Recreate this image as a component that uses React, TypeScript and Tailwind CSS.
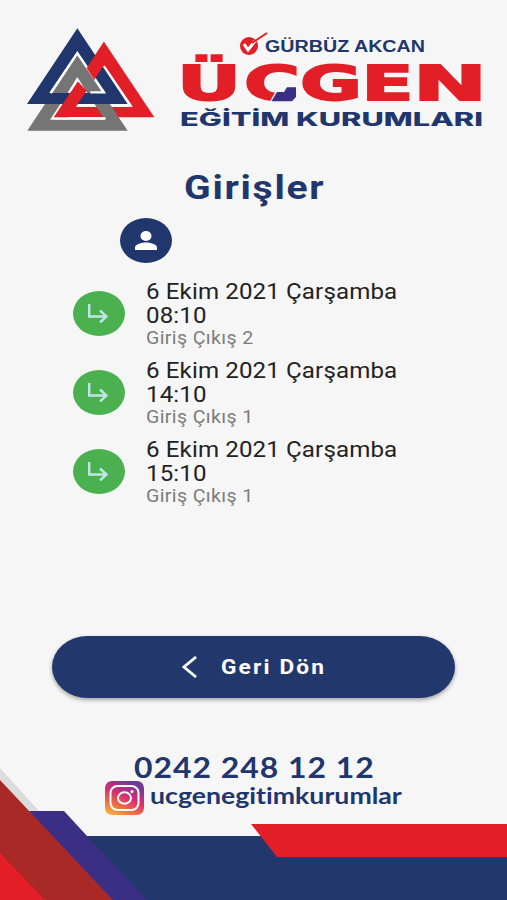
const entries = [
  { id: 1, date: '6 Ekim 2021 Çarşamba', time: '08:10', gate: 'Giriş Çıkış 2' },
  { id: 2, date: '6 Ekim 2021 Çarşamba', time: '14:10', gate: 'Giriş Çıkış 1' },
  { id: 3, date: '6 Ekim 2021 Çarşamba', time: '15:10', gate: 'Giriş Çıkış 1' },
]

function TriangleLogo() {
  return (
    <svg viewBox="0 0 450 360" className="w-[150px] h-[120px] shrink-0">
      <g fillRule="evenodd">
        <path fill="#e21f26" d="M267 65 418 292H117ZM267 136 183 260H350Z" />
        <path fill="none" stroke="#fff" strokeWidth="7" d="M267 139 347 257H183" />
        <path fill="#757575" d="M187 105 338 332H37ZM187 175 105 299H270Z" />
        <path fill="none" stroke="#fff" strokeWidth="7" d="M162 219 187 178 213 219M118 295H272" />
        <path fill="#21366d" d="M187 25 338 252H36ZM187 95 103 219H270Z" />
        <path fill="none" stroke="#fff" strokeWidth="7" d="M107 219 187 99 267 217H226" />
      </g>
      {/* red leg passing over the blue one */}
      <path fill="#e21f26" d="M267 65 215 144 238 179 267 136Z" />
      <path fill="#e21f26" d="M188 184 117 292H160L183 260 215 212Z" />
      <path fill="none" stroke="#fff" strokeWidth="4" d="M165 216 189 180" />
    </svg>
  )
}

function BrandText() {
  return (
    <svg viewBox="170 25 325 115" className="w-[325px] h-[115px] shrink-0">
      <circle cx="249" cy="46" r="9" fill="#e21f26" />
      <path d="M244 44 248 50 255 41" fill="none" stroke="#fff" strokeWidth="3" />
      <path d="M252 43 267 33" stroke="#e21f26" strokeWidth="2" />
      <text x="265" y="51.500" fontSize="16.800" textLength="160" lengthAdjust="spacingAndGlyphs" fill="#21366d" className="font-['Liberation_Sans',sans-serif] font-bold">
        GÜRBÜZ AKCAN
      </text>
      <g fontSize="47.500" fill="#e21f26" stroke="#e21f26" strokeWidth="1.800" className="font-['DejaVu_Sans',sans-serif] font-bold">
        <text x="177" y="100.200" textLength="64" lengthAdjust="spacingAndGlyphs">Ü</text>
        <text x="244" y="100.200" textLength="56" lengthAdjust="spacingAndGlyphs">C</text>
        <text x="300" y="100.200" textLength="62" lengthAdjust="spacingAndGlyphs">G</text>
        <text x="361.500" y="100.200" textLength="52" lengthAdjust="spacingAndGlyphs">E</text>
        <text x="413" y="100.200" textLength="74" lengthAdjust="spacingAndGlyphs">N</text>
      </g>
      <path d="M269 103 276.500 90 284 84H299V103Z" fill="#f6f6f6" />
      <path d="M271.500 101.200 277 92H284L287 87.300H296V97L292 101.200Z" fill="#3a2e85" />
      <text x="180" y="126.300" fontSize="18.200" textLength="303" lengthAdjust="spacingAndGlyphs" fill="#21366d" className="font-[Inter,sans-serif] font-extrabold">
        EĞİTİM KURUMLARI
      </text>
    </svg>
  )
}

function InstagramIcon() {
  return (
    <svg viewBox="0 0 39 34" className="w-[39px] h-[34px] shrink-0">
      <defs>
        <linearGradient id="ig" x1="0.1" y1="1" x2="0.6" y2="0">
          <stop offset="0" stopColor="#fcb445" />
          <stop offset="0.3" stopColor="#f0703f" />
          <stop offset="0.6" stopColor="#d92d72" />
          <stop offset="1" stopColor="#6a3a9c" />
        </linearGradient>
      </defs>
      <rect width="39" height="34" rx="7" fill="url(#ig)" />
      <rect x="5.500" y="5" width="28" height="24" rx="7" fill="none" stroke="#fff" strokeWidth="2" />
      <ellipse cx="19.500" cy="17" rx="6.500" ry="5.700" fill="none" stroke="#fff" strokeWidth="2" />
      <circle cx="27" cy="10.500" r="1.600" fill="#fff" />
    </svg>
  )
}

function FooterShapes() {
  return (
    <svg viewBox="0 0 507 150" className="absolute inset-0 w-full h-full">
      <path fill="#dcdcdc" d="M0 18 39 61H30L0 30Z" />
      <path fill="#22376b" d="M80 86H507V150H80Z" />
      <path fill="#3a2e85" d="M29 61H64L87 86 147 150H100Z" />
      <path fill="#a92927" d="M0 30 113 150H0Z" />
      <path fill="#e41e26" d="M0 103 45 150H0Z" />
      <path fill="#e21f26" d="M251 74H507V107H277Z" />
    </svg>
  )
}

export default function App() {
  return (
    <div className="w-[507px] h-[900px] bg-[#f6f6f6] flex flex-col overflow-hidden font-[Roboto,sans-serif]">
      {/* HEADER */}
      <header className="flex pt-5 pl-[15px] gap-[5px]">
        <TriangleLogo />
        <div className="pt-[5px]">
          <BrandText />
        </div>
      </header>

      <h1 className="mt-[27px] h-10 leading-10 pl-[184px] text-[34px] font-bold text-[#21366d]">
        <span className="inline-block origin-left scale-x-[1.15] tracking-[1.5px] whitespace-nowrap">Girişler</span>
      </h1>

      <div className="mt-[11px] ml-[120px] w-[52px] h-[45px] rounded-[50%] bg-[#21366d] flex items-center justify-center">
        <svg viewBox="0 0 22 19" className="w-[22px] h-[19px]" fill="#fff">
          <ellipse cx="11" cy="5" rx="5.500" ry="4.900" />
          <path d="M0 19V16.500C0 13 7 11.500 11 11.500S22 13 22 16.500V19Z" />
        </svg>
      </div>

      {/* ENTRIES */}
      <ul className="mt-4 pl-[73px]">
        {entries.map((item) => (
          <li key={item.id} className="flex h-[79px] gap-[21px]">
            <div className="mt-[12px] w-[52px] h-[45px] shrink-0 rounded-[50%] bg-[#4bb050] flex items-center justify-center">
              <svg viewBox="0 0 20 19" className="w-5 h-[19px] mr-[3px]" fill="none" stroke="#bfe6e6" strokeWidth="2.400">
                <path d="M1.200 0V12.500H18M12 6.500 18.500 12.500 12 18.500" />
              </svg>
            </div>
            <div className="pt-px origin-left scale-x-[1.12] whitespace-nowrap">
              <p className="text-[21.500px] leading-6 tracking-[0.120px] text-[#222]">{item.date}</p>
              <p className="text-[21.500px] leading-6 tracking-[0.120px] text-[#222]">{item.time}</p>
              <p className="text-[17.500px] leading-5 tracking-[0.330px] text-[#7d7d7d]">{item.gate}</p>
            </div>
          </li>
        ))}
      </ul>

      <button className="mt-[120px] ml-[52px] w-[403px] h-[62px] rounded-[36px/31px] bg-[#22376b] shadow-[0_2px_4px_rgba(0,0,0,0.35)] flex items-center pl-[130px] text-white">
        <svg viewBox="0 0 15 22" className="w-[15px] h-[22px]" fill="none" stroke="#fff" strokeWidth="2.800">
          <path d="M14 1 2 11 14 21" />
        </svg>
        <span className="ml-6 pt-0.5 text-[21px] font-bold tracking-[2px] origin-left scale-x-[1.08] whitespace-nowrap">Geri Dön</span>
      </button>

      {/* CONTACT */}
      <footer className="relative mt-auto h-[150px]">
        <FooterShapes />
        <div className="relative font-[Lato,sans-serif] font-bold text-[#21366d]">
          <p className="pl-[134px] h-[31px] leading-[33px] text-[29px]">
            <span className="inline-block origin-left scale-x-[1.1] tracking-[0.900px] whitespace-nowrap">0242 248 12 12</span>
          </p>
          <div className="flex pl-[105px] gap-[6px]">
            <InstagramIcon />
            <span className="text-[22.500px] leading-[29px] origin-left scale-x-[1.185] whitespace-nowrap [font-variant-ligatures:none]">ucgenegitimkurumlar</span>
          </div>
        </div>
      </footer>
    </div>
  )
}
